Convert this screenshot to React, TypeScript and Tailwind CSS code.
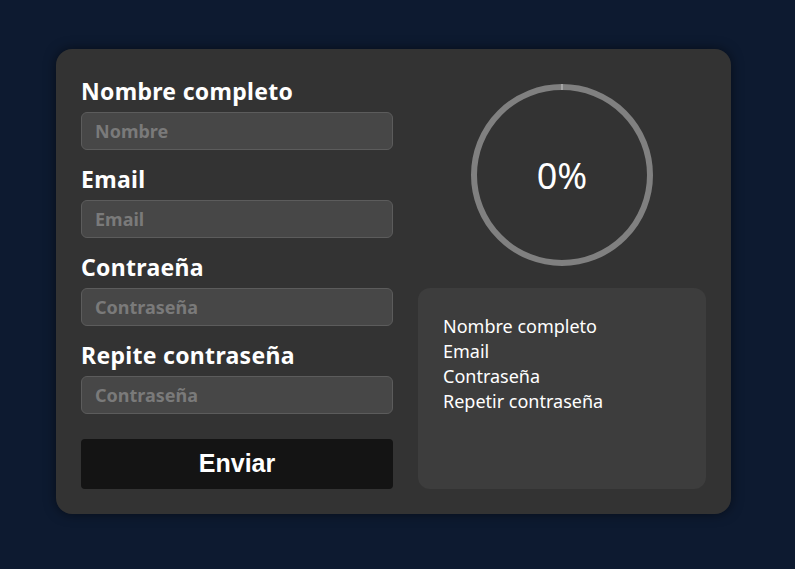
import React from "react";

const font = { fontFamily: '"Noto Sans", "Open Sans", sans-serif' };

function Field({ label, placeholder, type = "text" }: { label: string; placeholder: string; type?: string }) {
  return (
    <div className="flex flex-col">
      <label className="text-[23px] leading-[34px] font-bold tracking-[0.3px] text-white mb-[4px]">{label}</label>
      <input
        type={type}
        placeholder={placeholder}
        className="h-[38px] w-full rounded-[6px] border border-[#5c5c5c] bg-[#474747] px-[13px] text-[18px] font-bold text-white placeholder:text-[#7a7a7a] outline-none"
      />
    </div>
  );
}

export default function App() {
  return (
    <div className="min-h-[569px] w-full bg-[#0d1a30] flex items-start justify-start pl-[56px] pt-[49px]" style={font}>
      <div className="w-[675px] h-[465px] rounded-[16px] bg-[#333333] p-[25px] flex gap-[25px] shadow-[0_0_12px_rgba(0,0,0,0.5)]">
        <div className="w-[312px] flex flex-col">
          <div className="flex flex-col gap-[12px]">
            <Field label="Nombre completo" placeholder="Nombre" />
            <Field label="Email" placeholder="Email" type="email" />
            <Field label="Contraeña" placeholder="Contraseña" type="password" />
            <Field label="Repite contraseña" placeholder="Contraseña" type="password" />
          </div>
          <button
            className="mt-auto h-[50px] w-full rounded-[4px] bg-[#141414] text-white text-[25px] font-bold"
            style={{ fontFamily: '"Liberation Sans", Arial, sans-serif' }}
          >
            Enviar
          </button>
        </div>
        <div className="w-[288px] flex flex-col">
          <div className="flex justify-center pt-[10px]">
            <div className="relative w-[182px] h-[182px]">
              <svg width="182" height="182" viewBox="0 0 182 182" className="absolute inset-0">
                <circle cx="91" cy="91" r="88" fill="none" stroke="#808080" strokeWidth="6" />
                <line x1="91" y1="0" x2="91" y2="6" stroke="#c8c8c8" strokeWidth="1" />
              </svg>
              <div className="absolute inset-0 flex items-center justify-center text-white text-[36px] pt-[2px]">0%</div>
            </div>
          </div>
          <div className="mt-auto h-[201px] rounded-[12px] bg-[#3d3d3d] px-[25px] py-[26px] text-white text-[18px] leading-[25px]">
            <div>Nombre completo</div>
            <div>Email</div>
            <div>Contraseña</div>
            <div>Repetir contraseña</div>
          </div>
        </div>
      </div>
    </div>
  );
}
